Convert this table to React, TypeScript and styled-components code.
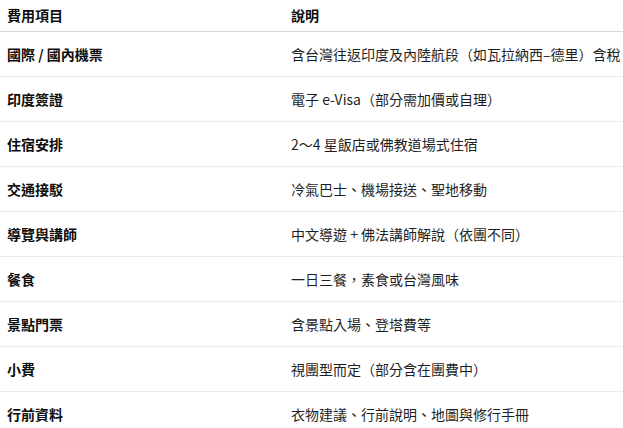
import React from 'react';
import styled, { createGlobalStyle } from 'styled-components';

const GlobalStyle = createGlobalStyle`
  html, body {
    margin: 0;
    padding: 0;
    background: #ffffff;
  }
  body {
    font-family: 'Noto Sans CJK TC', 'Noto Sans', sans-serif;
    color: #0d0d0d;
  }
`;

const Table = styled.table`
  width: 100%;
  table-layout: fixed;
  border-collapse: collapse;
  font-size: 14px;
  line-height: 20px;
`;

const HeadCell = styled.th<{ $first?: boolean }>`
  text-align: left;
  font-weight: 600;
  padding: 5px 7px 6px;
  border-bottom: 1px solid #d9d9d9;
  width: ${({ $first }) => ($first ? '270px' : 'auto')};
`;

const Row = styled.tr`
  border-bottom: 1px solid #ececec;
`;

const Cell = styled.td<{ $label?: boolean }>`
  padding: 12px 7px;
  font-weight: ${({ $label }) => ($label ? 600 : 400)};
  color: ${({ $label }) => ($label ? '#0d0d0d' : '#1f1f1f')};
  white-space: nowrap;
  overflow: visible;
  vertical-align: middle;
`;

const rows: [string, string][] = [
  ['國際 / 國內機票', '含台灣往返印度及內陸航段（如瓦拉納西–德里）含稅'],
  ['印度簽證', '電子 e-Visa（部分需加價或自理）'],
  ['住宿安排', '2～4 星飯店或佛教道場式住宿'],
  ['交通接駁', '冷氣巴士、機場接送、聖地移動'],
  ['導覽與講師', '中文導遊 + 佛法講師解說（依團不同）'],
  ['餐食', '一日三餐，素食或台灣風味'],
  ['景點門票', '含景點入場、登塔費等'],
  ['小費', '視團型而定（部分含在團費中）'],
  ['行前資料', '衣物建議、行前說明、地圖與修行手冊'],
];

export default function App() {
  return (
    <>
      <GlobalStyle />
      <Table>
        <thead>
          <tr>
            <HeadCell $first>費用項目</HeadCell>
            <HeadCell>說明</HeadCell>
          </tr>
        </thead>
        <tbody>
          {rows.map(([label, desc]) => (
            <Row key={label}>
              <Cell $label>{label}</Cell>
              <Cell>{desc}</Cell>
            </Row>
          ))}
        </tbody>
      </Table>
    </>
  );
}
